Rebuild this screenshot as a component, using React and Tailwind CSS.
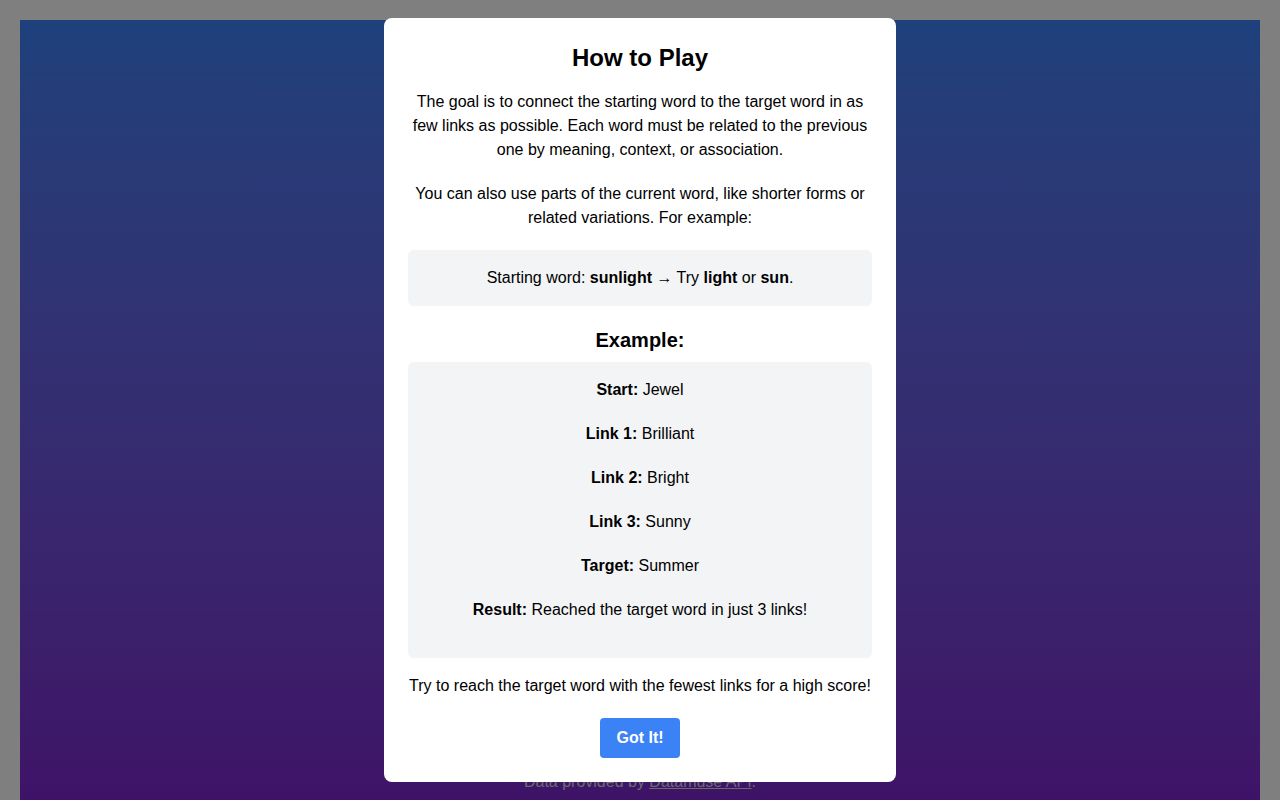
import React, { useState } from 'react';

const example = [
    { label: 'Start:', value: 'Jewel' },
    { label: 'Link 1:', value: 'Brilliant' },
    { label: 'Link 2:', value: 'Bright' },
    { label: 'Link 3:', value: 'Sunny' },
    { label: 'Target:', value: 'Summer' },
    { label: 'Result:', value: 'Reached the target word in just 3 links!' },
];

function HowToPlay({ onClose }) {
    return (
        <div className="fixed inset-0 z-50 flex items-center justify-center bg-black/50">
            <div className="w-full max-w-lg rounded-lg bg-white p-6 text-center text-black">
                <h2 className="mb-4 text-2xl font-bold">How to Play</h2>
                <p className="mb-5">
                    The goal is to connect the starting word to the target word in as few links as possible. Each word must be related to the previous one by meaning, context, or association.
                </p>
                <p className="mb-5">
                    You can also use parts of the current word, like shorter forms or related variations. For example:
                </p>
                <div className="mb-5 rounded-md bg-[#f3f4f6] p-4">
                    Starting word: <strong>sunlight</strong> → Try <strong>light</strong> or <strong>sun</strong>.
                </div>
                <h3 className="mb-2 text-xl font-bold">Example:</h3>
                <div className="mb-4 rounded-md bg-[#f3f4f6] p-4">
                    {example.map((row) => (
                        <p key={row.label} className="mb-5">
                            <strong>{row.label}</strong> {row.value}
                        </p>
                    ))}
                </div>
                <p className="mb-5">Try to reach the target word with the fewest links for a high score!</p>
                <button
                    onClick={onClose}
                    className="rounded bg-[#3b82f6] px-4 py-2 font-bold text-white hover:bg-[#2563eb]"
                >
                    Got It!
                </button>
            </div>
        </div>
    );
}

export default function App() {
    const [showHelp, setShowHelp] = useState(true);

    return (
        <div className="bg-white p-5" style={{ fontFamily: '"Liberation Sans", Arial, sans-serif' }}>
            <div className="flex min-h-screen flex-col bg-gradient-to-b from-[#3b82f6] to-[#7e22ce]">
                <main className="flex-1" />
                <footer className="pb-[26px] text-center text-[#d1d5db]">
                    Data provided by <a href="#" className="underline">Datamuse API</a>.
                </footer>
            </div>
            {showHelp && <HowToPlay onClose={() => setShowHelp(false)} />}
        </div>
    );
}
